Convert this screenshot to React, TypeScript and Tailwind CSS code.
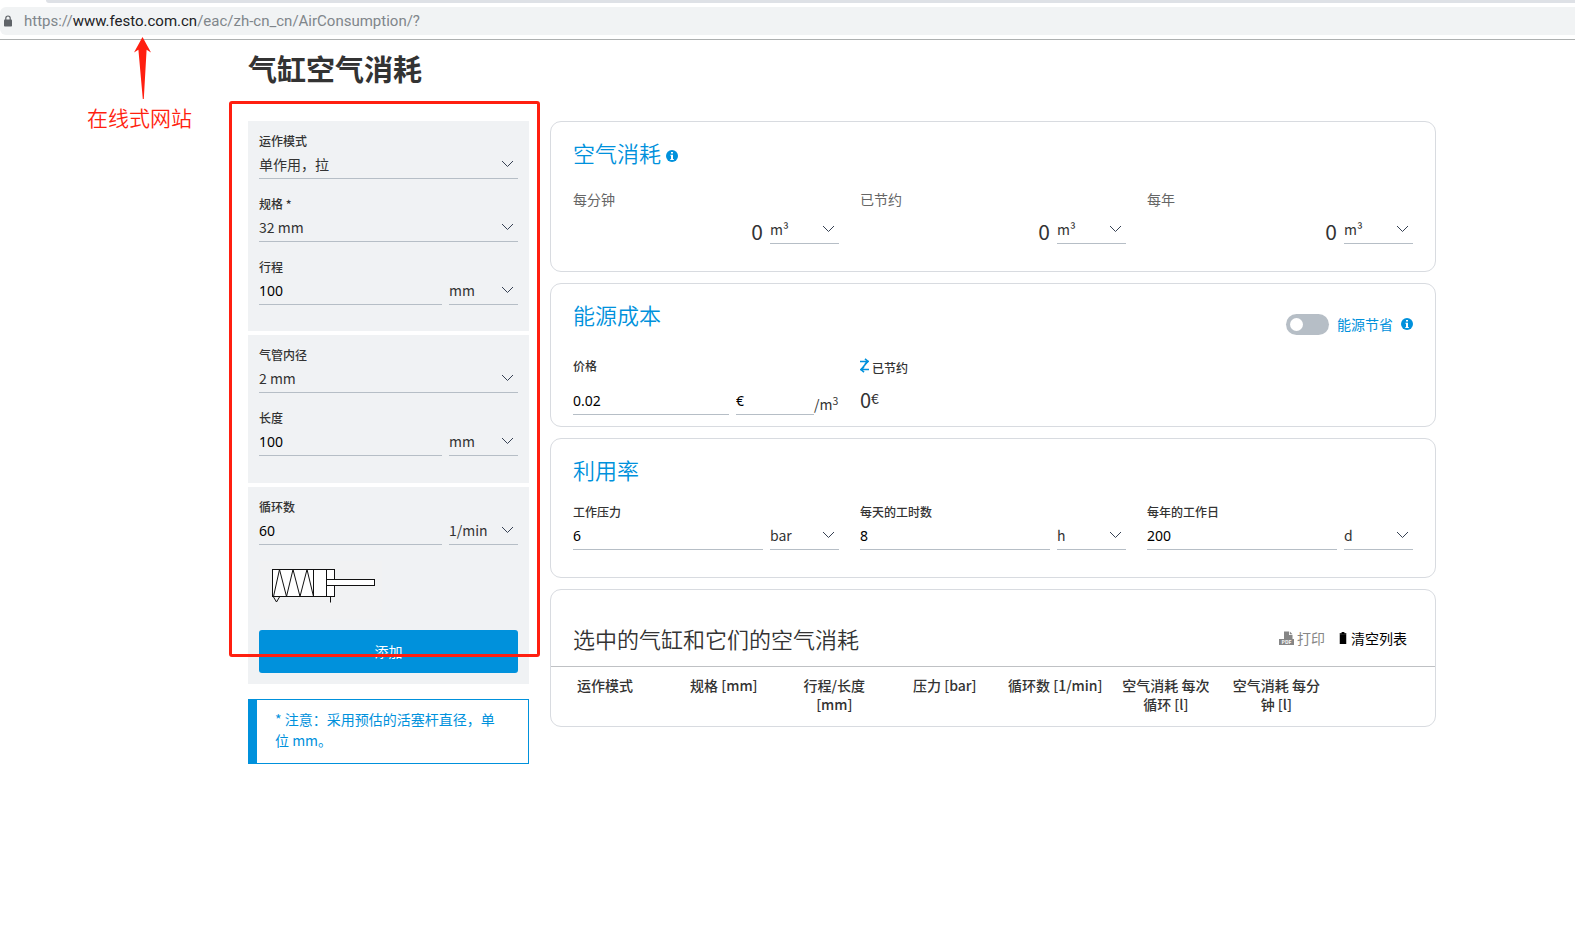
import React, { useId, useState } from "react";
import clsx from "clsx";

const Chevron = () => (
  <svg
    className="pointer-events-none col-start-1 row-start-1 mr-1 justify-self-end self-center text-gray-700"
    width="13"
    height="8"
    viewBox="0 0 13 8"
    fill="none"
    stroke="currentColor"
  >
    <path d="M1 1l5.5 5.5L12 1" />
  </svg>
);

const InfoIcon = ({ className }: { className?: string }) => (
  <svg className={className} width="12" height="12" viewBox="0 0 12 12" aria-hidden="true">
    <circle cx="6" cy="6" r="6" fill="#0091dc" />
    <path d="M5 2h2v1.6H5zM4.4 4.8H7V9h.8v1H4.3V9H5V5.8h-.6z" fill="#fff" />
  </svg>
);

const LockIcon = () => (
  <svg width="10" height="12" viewBox="0 0 10 12" aria-hidden="true">
    <path d="M2.8 5V3.2a2.2 2.2 0 0 1 4.4 0V5" fill="none" stroke="#5f6368" strokeWidth="1.2" />
    <rect x="1" y="4.6" width="8" height="6.9" rx="0.8" fill="#5f6368" />
  </svg>
);

const SwapIcon = () => (
  <svg width="9" height="15" viewBox="0 0 9 15" fill="none" stroke="#0091dc" strokeWidth="1.6" aria-hidden="true">
    <path d="M0 3.5h7.6L1.2 11.5H9" />
    <path d="M5 .8l3 2.7-3 2.4M4 9.1l-3 2.4L4 14.2" />
  </svg>
);

const PdfIcon = () => (
  <svg width="15" height="15" viewBox="0 0 15 15" aria-hidden="true">
    <path d="M5 .5h5V4h3.5v4H5z" fill="#868686" />
    <path d="M10.8.5l2.7 2.7h-2.7z" fill="#868686" />
    <rect y="8" width="15" height="6" fill="#868686" />
    <text x="7.5" y="12.9" textAnchor="middle" fontSize="5" fontWeight="700" fill="#fff">PDF</text>
  </svg>
);

const BinIcon = () => (
  <svg width="8" height="13" viewBox="0 0 8 13" aria-hidden="true">
    <path d="M0 1h8v11H0z" fill="#000" opacity="0.25" />
    <path d="M2.6 0h2.8v1.2H7v1H1v-1h1.6zM1 3h6v9H1z" fill="#000" />
    <path d="M1 2h6v1.2H1z" fill="#000" opacity="0.8" />
  </svg>
);

const CylinderDrawing = () => (
  <svg className="mt-4" width="123" height="58" viewBox="0 0 123 58" fill="none" stroke="#111">
    <rect width="123" height="58" fill="#f1f2f3" stroke="none" />
    <rect x="13.5" y="8.5" width="62" height="27" fill="#fff" />
    <path d="M14.5 35.5l6-27 7 27 6.5-27 7 27 7-27 6.5 27" />
    <path d="M54.5 8.5v27M67.5 8.5v27M71.5 35.5v6M14.5 36l3 5 3-5" />
    <rect x="67.5" y="18.5" width="48" height="6" fill="#fff" />
  </svg>
);

interface SelectProps {
  id?: string;
  label?: string;
  options: string[];
  className?: string;
}

function Select({ id, label, options, className }: SelectProps) {
  return (
    <div className={clsx("grid shrink-0 border-b border-[#b6bec6]", className)}>
      <select
        id={id}
        aria-label={label}
        className="col-start-1 row-start-1 h-7 w-full appearance-none bg-transparent text-sm leading-7 text-[#333] outline-none"
      >
        {options.map((o) => (
          <option key={o}>{o}</option>
        ))}
      </select>
      <Chevron />
    </div>
  );
}

interface TextInputProps {
  id?: string;
  label?: string;
  value: string;
  className?: string;
}

function TextInput({ id, label, value, className }: TextInputProps) {
  const [text, setText] = useState(value);

  return (
    <input
      id={id}
      aria-label={label}
      type="text"
      value={text}
      onChange={(e) => setText(e.target.value)}
      className={clsx(
        "h-[29px] min-w-0 border-b border-[#b6bec6] bg-transparent font-['Noto_Sans',sans-serif] text-sm text-black outline-none",
        className
      )}
    />
  );
}

interface FieldProps {
  label: string;
  value?: string;
  options: string[];
}

// without a value the field is only a drop-down, otherwise the drop-down is the unit
function Field({ label, value, options }: FieldProps) {
  const id = useId();

  return (
    <div>
      <label htmlFor={id} className="mb-px block text-xs leading-4 font-medium">
        {label}
      </label>
      {value === undefined ? (
        <Select id={id} options={options} />
      ) : (
        <div className="flex gap-[7px]">
          <TextInput id={id} value={value} className="flex-1" />
          <Select label={`${label} 单位`} options={options} className="w-[69px]" />
        </div>
      )}
    </div>
  );
}

function Result({ label }: { label: string }) {
  return (
    <div>
      <p className="text-sm leading-5 text-[#666]">{label}</p>
      <div className="mt-[6px] flex items-end justify-end gap-[7px]">
        <output className="text-[21px] leading-[26px]">0</output>
        <Select label={`${label} 单位`} options={["m³", "l"]} className="w-[69px]" />
      </div>
    </div>
  );
}

const cardClass = "rounded-[11px] border border-[#d8dbe0]";
const titleClass = "text-[22px] leading-8 font-[350]";

const headers = [
  ["规格 [mm]"],
  ["行程/长度", "[mm]"],
  ["压力 [bar]"],
  ["循环数 [1/min]"],
  ["空气消耗 每次", "循环 [l]"],
  ["空气消耗 每分", "钟 [l]"]
];

function AddressBar() {
  return (
    <header className="border-b border-[#adb0b0] pb-1">
      <div className="ml-[46px] h-[3px] rounded-bl-md bg-[#dee1e6]" />
      <div className="mt-1 flex h-7 items-center gap-[11px] rounded-l-md bg-[#f1f3f4] pl-[3px]">
        <LockIcon />
        <span className="font-[Roboto,sans-serif] text-[15px] leading-5 text-[#80868b]">
          https://<span className="text-[#202124]">www.festo.com.cn</span>/eac/zh-cn_cn/AirConsumption/?
        </span>
      </div>
    </header>
  );
}

function Sidebar() {
  return (
    <aside className="w-[281px] shrink-0">
      <form onSubmit={(e) => e.preventDefault()} className="flex flex-col gap-1">
        <div className="flex flex-col gap-[17px] bg-[#f0f2f4] px-[11px] pt-3 pb-[26px]">
          <Field label="运作模式" options={["单作用，拉", "单作用，推", "双作用"]} />
          <Field label="规格 *" options={["32 mm", "40 mm", "50 mm"]} />
          <Field label="行程" value="100" options={["mm", "inch"]} />
        </div>
        <div className="flex flex-col gap-[17px] bg-[#f0f2f4] px-[11px] pt-3 pb-[27px]">
          <Field label="气管内径" options={["2 mm", "4 mm", "6 mm"]} />
          <Field label="长度" value="100" options={["mm", "inch"]} />
        </div>
        <div className="bg-[#f0f2f4] px-[11px] pt-3 pb-[11px]">
          <Field label="循环数" value="60" options={["1/min", "1/h"]} />
          <CylinderDrawing />
          <button type="submit" className="mt-[11px] h-[43px] w-full rounded-[3px] bg-[#0091dc] pb-[2px] text-sm text-white">
            添加
          </button>
        </div>
      </form>
      <p className="mt-[15px] border border-l-9 border-[#0091dc] pt-[9px] pr-[22px] pb-3 pl-[18px] text-sm leading-[21px] text-[#0091dc]">
        * 注意：采用预估的活塞杆直径，单位 mm。
      </p>
    </aside>
  );
}

function EnergyCard() {
  const [saving, setSaving] = useState(false);

  return (
    <section className={clsx(cardClass, "px-[22px] pt-[14px] pb-[11px]")}>
      <div className="flex h-[42px] items-start justify-between">
        <h2 className={clsx(titleClass, "text-[#0091dc]")}>能源成本</h2>
        <div className="mt-[10px] flex h-8 items-center gap-2 text-sm text-[#0091dc]">
          <input
            id="saving"
            type="checkbox"
            role="switch"
            checked={saving}
            onChange={(e) => setSaving(e.target.checked)}
            className="h-[21px] w-[43px] appearance-none rounded-full bg-[#b6bec6] p-1 before:block before:size-[13px] before:rounded-full before:bg-white checked:bg-[#0091dc] checked:before:ml-auto"
          />
          <label htmlFor="saving">能源节省</label>
          <InfoIcon />
        </div>
      </div>
      <div className="mt-[18px] grid grid-cols-3 gap-[21px]">
        <div>
          <label htmlFor="price" className="block text-xs leading-4 font-medium">
            价格
          </label>
          <div className="mt-3 flex items-end">
            <TextInput id="price" value="0.02" className="mr-[7px] flex-1" />
            <TextInput label="货币" value="€" className="w-[78px]" />
            <span className="w-[25px] text-sm leading-[22px]">
              /m<sup>3</sup>
            </span>
          </div>
        </div>
        <div>
          <div className="flex h-5 items-start gap-[3px] text-xs leading-5 font-medium">
            <SwapIcon />
            已节约
          </div>
          <output className="mt-2 flex text-xl leading-7">
            0<span className="text-sm leading-6">€</span>
          </output>
        </div>
      </div>
    </section>
  );
}

function CylinderTable() {
  return (
    <section className={cardClass}>
      <div className="flex items-center justify-between border-b border-[#bfc1c4] pt-8 pr-7 pb-3 pl-[22px]">
        <h2 className={titleClass}>选中的气缸和它们的空气消耗</h2>
        <div className="flex gap-[14px] text-sm">
          <button type="button" disabled className="flex items-center gap-[3px] text-[#868686]">
            <PdfIcon />
            打印
          </button>
          <button type="button" className="flex items-center gap-1 text-black">
            <BinIcon />
            清空列表
          </button>
        </div>
      </div>
      <table className="mt-[9px] mb-3 w-full table-fixed text-sm leading-[19px]">
        <thead>
          <tr className="align-top">
            <th className="w-[13.3%] pl-[26px] text-left font-medium">运作模式</th>
            {headers.map((lines) => (
              <th key={lines[0]} className="w-[12.5%] font-medium whitespace-nowrap">
                {lines.map((line) => (
                  <span key={line} className="block">
                    {line}
                  </span>
                ))}
              </th>
            ))}
            <td />
          </tr>
        </thead>
      </table>
    </section>
  );
}

// red marker strokes drawn over the page
function Annotations() {
  return (
    <>
      <svg className="absolute top-[37px] left-[134px]" width="17" height="62" viewBox="0 0 17 62" fill="#ff1f10">
        <path d="M8.5 0L17 15.5l-4.4-2.7L9.8 62H8.8L4.4 12.8 0 15.5z" />
      </svg>
      <p className="absolute top-[103px] left-[87px] text-[21px] leading-7 font-[350] text-[#ff1f10]">在线式网站</p>
      <div className="pointer-events-none absolute top-[101px] left-[229px] h-[556px] w-[311px] rounded-[3px] border-3 border-[#ff1f10]" />
    </>
  );
}

export default function App() {
  return (
    <div className="relative bg-white font-['Noto_Sans_CJK_SC',sans-serif] text-[#333]">
      <AddressBar />
      <main className="pr-[139px] pb-10 pl-[248px]">
        <h1 className="pt-2 text-[29px] leading-10 font-bold">气缸空气消耗</h1>
        <div className="mt-[33px] flex items-start gap-[21px]">
          <Sidebar />
          <div className="flex min-w-0 flex-1 flex-col gap-[11px]">
            <section className={clsx(cardClass, "px-[22px] pt-[14px] pb-[27px]")}>
              <h2 className={clsx(titleClass, "flex items-end gap-[5px] text-[#0091dc]")}>
                空气消耗
                <InfoIcon className="mb-[6px]" />
              </h2>
              <div className="mt-[21px] grid grid-cols-3 gap-[21px]">
                <Result label="每分钟" />
                <Result label="已节约" />
                <Result label="每年" />
              </div>
            </section>
            <EnergyCard />
            <section className={clsx(cardClass, "px-[22px] pt-[14px] pb-[27px]")}>
              <h2 className={clsx(titleClass, "text-[#0091dc]")}>利用率</h2>
              <div className="mt-[19px] grid grid-cols-3 gap-[21px]">
                <Field label="工作压力" value="6" options={["bar", "psi", "MPa"]} />
                <Field label="每天的工时数" value="8" options={["h"]} />
                <Field label="每年的工作日" value="200" options={["d"]} />
              </div>
            </section>
            <CylinderTable />
          </div>
        </div>
      </main>
      <Annotations />
    </div>
  );
}
